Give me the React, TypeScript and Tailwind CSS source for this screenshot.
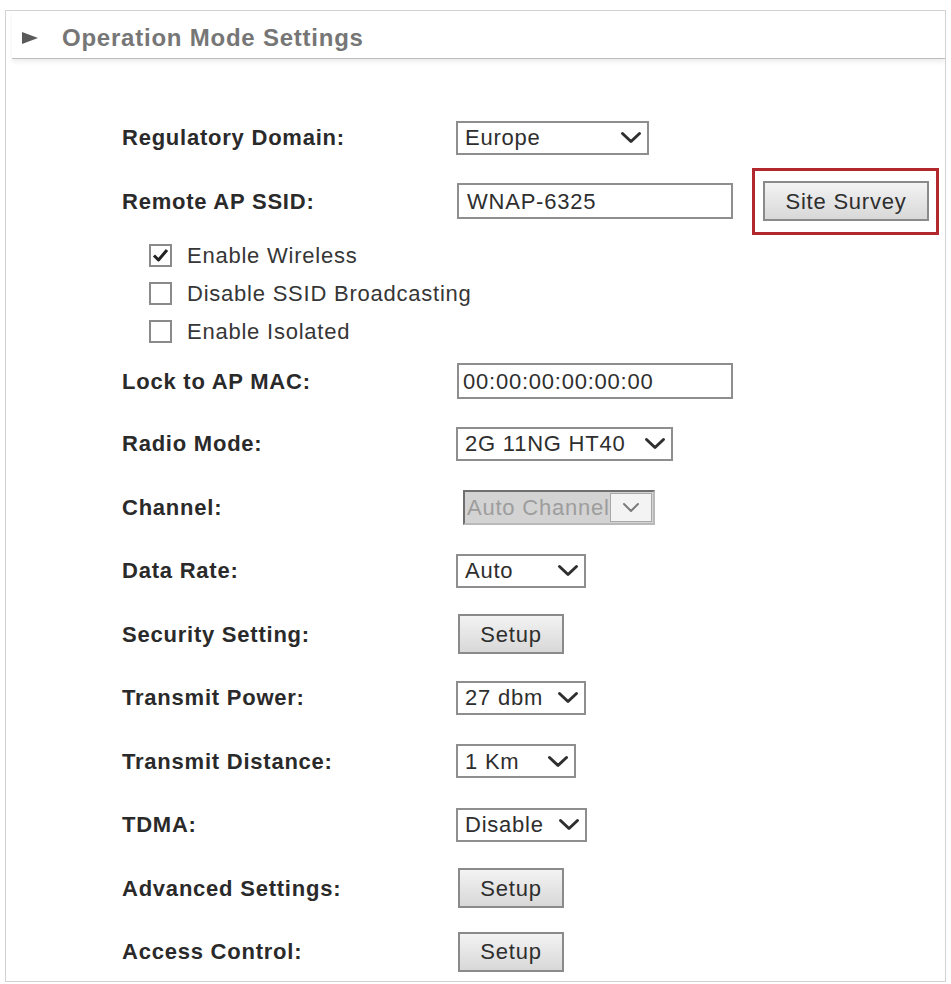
import type { ReactNode } from "react";

function Chevron({ thin = false }: { thin?: boolean }) {
  return (
    <svg width={thin ? 18 : 22} height={thin ? 11 : 13} viewBox={thin ? "0 0 18 11" : "0 0 22 13"} fill="none">
      {thin ? (
        <path d="M2 2 L9 9 L16 2" stroke="#7b7b7b" strokeWidth="2" strokeLinecap="round" strokeLinejoin="round" />
      ) : (
        <path d="M2.5 2.5 L11 10.5 L19.5 2.5" stroke="#2f2f2f" strokeWidth="3" strokeLinecap="round" strokeLinejoin="round" />
      )}
    </svg>
  );
}

function Select({ value, width }: { value: string; width: string }) {
  return (
    <div
      className={`flex h-[34px] items-center justify-between border-2 border-[#8e8e8e] bg-white pl-[7px] pr-[5px] text-[#2e2e2e] ${width}`}
    >
      <span className="whitespace-nowrap">{value}</span>
      <Chevron />
    </div>
  );
}

function TextInput({ value, pad }: { value: string; pad: string }) {
  return (
    <div className={`ml-[1px] flex h-[36px] w-[276px] items-center border-2 border-[#8e8e8e] bg-white text-[#2e2e2e] ${pad}`}>
      {value}
    </div>
  );
}

function Button({ children, width }: { children: ReactNode; width: string }) {
  return (
    <button
      type="button"
      className={`flex h-[40px] items-center justify-center border-2 border-[#8a8a8a] bg-linear-to-b from-[#f3f3f3] to-[#d8d8d8] text-[#2e2e2e] ${width}`}
    >
      {children}
    </button>
  );
}

function Row({ label, children, height = "h-[63.5px]" }: { label: string; children?: ReactNode; height?: string }) {
  return (
    <div className={`flex items-center ${height}`}>
      <div className="w-[334px] shrink-0 whitespace-nowrap font-bold text-[#2a2a2a]">{label}</div>
      <div className="flex items-center">{children}</div>
    </div>
  );
}

function Check({ label, checked = false }: { label: string; checked?: boolean }) {
  return (
    <div className="flex h-[38px] items-center pl-[27px]">
      <span className="flex h-[23px] w-[23px] items-center justify-center border-2 border-[#8a8a8a] bg-white">
        {checked ? (
          <svg width="17" height="15" viewBox="0 0 17 15" fill="none">
            <path d="M2 7.5 L6.5 12 L15 2" stroke="#222" strokeWidth="3" strokeLinejoin="round" />
          </svg>
        ) : null}
      </span>
      <span className="ml-[15px] whitespace-nowrap text-[#363636]">{label}</span>
    </div>
  );
}

export default function App() {
  return (
    <div className="min-h-[984px] bg-white pl-[5px] pt-[10px] font-['Liberation_Sans',Arial,sans-serif] text-[22px] tracking-[0.035em]">
      <div className="h-[972px] w-[941px] overflow-hidden border border-[#d2d2d2]">
        <div className="ml-[6px] flex h-[48px] items-center gap-[24px] border-b border-[#bdbdbd] pl-[10px] pt-[6px] shadow-[0_3px_4px_rgba(0,0,0,0.07)]">
          <svg width="16" height="12" viewBox="0 0 16 12">
            <polygon points="0,0 16,6 0,12" fill="#5a5a5a" />
          </svg>
          <span className="text-[24px] font-bold text-[#767676]">Operation Mode Settings</span>
        </div>

        <div className="pl-[116px] pt-[47px]">
          <Row label="Regulatory Domain:">
            <Select value="Europe" width="w-[193px]" />
          </Row>
          <Row label="Remote AP SSID:">
            <TextInput value="WNAP-6325" pad="pl-[8px]" />
            <div className="ml-[19px] flex h-[67px] w-[187px] items-center justify-center border-[3px] border-[#b3282d] pl-[1px]">
              <Button width="w-[166px]">Site Survey</Button>
            </div>
          </Row>

          <div className="pt-[3px]">
            <Check label="Enable Wireless" checked />
            <Check label="Disable SSID Broadcasting" />
            <Check label="Enable Isolated" />
          </div>

          <Row label="Lock to AP MAC:" height="h-[62px]">
            <TextInput value="00:00:00:00:00:00" pad="pl-[4px]" />
          </Row>
          <Row label="Radio Mode:">
            <Select value="2G 11NG HT40" width="w-[217px]" />
          </Row>
          <Row label="Channel:">
            <div className="ml-[7px] flex h-[35px] w-[192px] items-center border-2 border-t-[#6f6f6f] border-l-[#6f6f6f] border-r-[#b9b9b9] border-b-[#b9b9b9] bg-[#d3d3d3] pl-[2px]">
              <span className="flex-1 overflow-hidden whitespace-nowrap text-[#9d9d9d]">Auto Channel</span>
              <span className="mr-[1px] flex h-[29px] w-[42px] items-center justify-center border border-[#a8a8a8] bg-[#f3f3f3]">
                <Chevron thin />
              </span>
            </div>
          </Row>
          <Row label="Data Rate:">
            <Select value="Auto" width="w-[130px]" />
          </Row>
          <Row label="Security Setting:">
            <span className="ml-[2px]">
              <Button width="w-[106px]">Setup</Button>
            </span>
          </Row>
          <Row label="Transmit Power:">
            <Select value="27 dbm" width="w-[130px]" />
          </Row>
          <Row label="Transmit Distance:">
            <Select value="1 Km" width="w-[120px]" />
          </Row>
          <Row label="TDMA:">
            <Select value="Disable" width="w-[131px]" />
          </Row>
          <Row label="Advanced Settings:">
            <span className="ml-[2px]">
              <Button width="w-[106px]">Setup</Button>
            </span>
          </Row>
          <Row label="Access Control:">
            <span className="ml-[2px]">
              <Button width="w-[106px]">Setup</Button>
            </span>
          </Row>
        </div>
      </div>
    </div>
  );
}
